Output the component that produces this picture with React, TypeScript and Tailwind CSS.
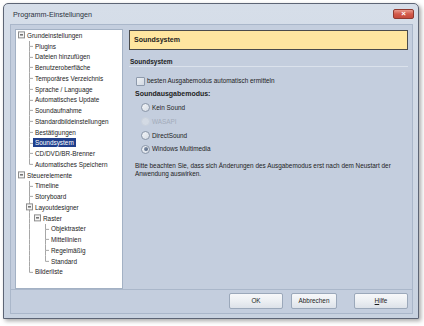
import React from "react";

type Row = {
  t: string;
  l: number;
  box?: boolean;
  first?: boolean;
  last?: boolean;
  guides?: boolean[];
  sel?: boolean;
};

const rows: Row[] = [
  { t: "Grundeinstellungen", l: 0, box: true },
  { t: "Plugins", l: 1, first: true },
  { t: "Dateien hinzufügen", l: 1 },
  { t: "Benutzeroberfläche", l: 1 },
  { t: "Temporäres Verzeichnis", l: 1 },
  { t: "Sprache / Language", l: 1 },
  { t: "Automatisches Update", l: 1 },
  { t: "Soundaufnahme", l: 1 },
  { t: "Standardbildeinstellungen", l: 1 },
  { t: "Bestätigungen", l: 1 },
  { t: "Soundsystem", l: 1, sel: true },
  { t: "CD/DVD/BR-Brenner", l: 1 },
  { t: "Automatisches Speichern", l: 1, last: true },
  { t: "Steuerelemente", l: 0, box: true },
  { t: "Timeline", l: 1, first: true },
  { t: "Storyboard", l: 1 },
  { t: "Layoutdesigner", l: 1, box: true },
  { t: "Raster", l: 2, box: true, first: true, last: true, guides: [true] },
  { t: "Objektraster", l: 3, first: true, guides: [true, false] },
  { t: "Mittellinien", l: 3, guides: [true, false] },
  { t: "Regelmäßig", l: 3, guides: [true, false] },
  { t: "Standard", l: 3, last: true, guides: [true, false] },
  { t: "Bilderliste", l: 1, last: true },
];

const H = 10.75;
const LINE = "#a7a7a7";

// one 8px column of tree connectors
function Cell({ top, bottom, stub, box }: { top?: boolean; bottom?: boolean; stub?: boolean; box?: boolean }) {
  const m = H / 2;
  return (
    <svg width="8" height={H} viewBox={`0 0 8 ${H}`} className="shrink-0 block">
      {top && <line x1="4.5" y1="0" x2="4.5" y2={m} stroke={LINE} strokeWidth="1" />}
      {bottom && <line x1="4.5" y1={m} x2="4.5" y2={H} stroke={LINE} strokeWidth="1" />}
      {stub && <line x1="4.5" y1={m} x2="8" y2={m} stroke={LINE} strokeWidth="1" />}
      {box && (
        <>
          <rect x="1.5" y={m - 3.5} width="6" height="6" fill="#f4f4f4" stroke="#8d8d8d" strokeWidth="1" />
          <line x1="3" y1={m - 0.5} x2="6" y2={m - 0.5} stroke="#2b2b2b" strokeWidth="1" />
        </>
      )}
    </svg>
  );
}

function TreeRow({ r }: { r: Row }) {
  const cells: React.ReactNode[] = [<div key="c0" className="w-[8px] shrink-0" />];
  if (r.l === 0) {
    cells[0] = <Cell key="c0" box />;
  } else {
    for (let k = 1; k < r.l; k++) {
      const g = r.guides?.[k - 1];
      cells.push(<Cell key={"g" + k} top={g} bottom={g} />);
    }
    if (r.box) {
      cells.push(<Cell key="own" top={!r.first} bottom={!r.last} box />);
    } else {
      cells.push(<Cell key="own" top bottom={!r.last} stub />);
    }
  }
  return (
    <div className="flex items-center h-[10.75px]">
      {cells}
      <span
        className={
          "px-[2px] leading-[9px] whitespace-nowrap " +
          (r.sel ? "bg-[#203f8c] text-white" : "text-[#1d1d1d]")
        }
      >
        {r.t}
      </span>
    </div>
  );
}

function Radio({ label, checked, disabled }: { label: string; checked?: boolean; disabled?: boolean }) {
  return (
    <div className="flex items-center h-[13.7px] pl-[12px] gap-[2px]">
      <span
        className={
          "w-[9px] h-[9px] rounded-full border flex items-center justify-center " +
          (disabled
            ? "border-[#c9d1dc] bg-[#d3dae4]"
            : "border-[#8a96a8] bg-gradient-to-br from-[#f3f5f8] to-[#d6dce5]")
        }
      >
        {checked && <span className="w-[4px] h-[4px] rounded-full bg-gradient-to-br from-[#8a9bb3] to-[#4f607a]" />}
      </span>
      <span className={disabled ? "text-[#a3acba]" : "text-[#1d1d1d]"}>{label}</span>
    </div>
  );
}

function Btn({ w, children }: { w: string; children: React.ReactNode }) {
  return (
    <div
      className={
        w +
        " h-[16px] rounded-[2px] border border-[#9ba8ba] bg-gradient-to-b from-[#f7f8fa] via-[#eceff3] to-[#dde2e9] flex items-center justify-center text-[#1d1d1d]"
      }
    >
      {children}
    </div>
  );
}

export default function App() {
  return (
    <div className="w-[424px] h-[326px] bg-white font-['Liberation_Sans',Arial,sans-serif] text-[6.4px] pt-[3px] pl-[3px]">
      <div className="w-[416px] h-[316px] rounded-t-[5px] border border-[#5d6575] bg-gradient-to-b from-[#d6dee9] to-[#c8d2e0] shadow-[2px_2px_4px_rgba(0,0,0,0.35)] flex flex-col">
        {/* title bar */}
        <div className="h-[20px] flex items-center pt-[3px] pl-[9px] pr-[4px] shrink-0">
          <span className="text-[7.2px] text-[#2b3340] flex-1">Programm-Einstellungen</span>
          <div className="w-[21px] h-[10px] -mt-[4px] rounded-[2px] border border-[#8f3a30] bg-gradient-to-b from-[#e8988c] via-[#d2594a] to-[#c44a3c] flex items-center justify-center text-white font-bold text-[8px] leading-none">
            ×
          </div>
        </div>

        {/* client area */}
        <div className="ml-[6px] mr-[5px] mb-[4px] flex-1 border border-[#aab7ca] bg-[#c4cede] flex flex-col">
          <div className="flex pt-[4px] pl-[4px] pr-[4px] h-[264px] shrink-0 gap-[6px]">
            {/* tree */}
            <div className="w-[108px] h-[260px] bg-white border border-[#a3b1c4] pl-[1px] overflow-hidden">
              {rows.map((r) => (
                <TreeRow key={r.t + r.l} r={r} />
              ))}
            </div>

            {/* settings page */}
            <div className="w-[279px] pt-[1px] flex flex-col">
              <div className="h-[20px] border border-[#4b4b4b] bg-[#ffe6a0] flex items-center pl-[4px] font-bold text-[7px] text-[#1d1d1d]">
                Soundsystem
              </div>
              <div className="mt-[7px] h-[10px] flex items-center pl-[1px] font-bold text-[6.5px] text-[#1d1d1d] border-b border-[#dbe2ec]">
                Soundsystem
              </div>
              <div className="mt-[9px] h-[10px] flex items-center pl-[7px] gap-[2px]">
                <span className="w-[9px] h-[9px] rounded-[1px] border border-[#8e9aac] bg-gradient-to-br from-[#eef1f5] to-[#d2d9e3]" />
                <span className="text-[#1d1d1d]">besten Ausgabemodus automatisch ermitteln</span>
              </div>
              <div className="mt-[3.5px] h-[9px] flex items-center pl-[6px] font-bold text-[7px] text-[#1d1d1d]">
                Soundausgabemodus:
              </div>
              <div className="mt-[2.6px] flex flex-col">
                <Radio label="Kein Sound" />
                <Radio label="WASAPI" disabled />
                <Radio label="DirectSound" />
                <Radio label="Windows Multimedia" checked />
              </div>
              <p className="mt-[6px] pl-[6px] pr-[3px] leading-[8.6px] text-[#1d1d1d]">
                Bitte beachten Sie, dass sich Änderungen des Ausgabemodus erst nach dem Neustart der Anwendung
                auswirken.
              </p>
            </div>
          </div>

          {/* buttons */}
          <div className="border-t border-[#aab7ca] flex-1 flex items-start pt-[3px] pl-[218px] gap-[8px]">
            <Btn w="w-[54px]">OK</Btn>
            <Btn w="w-[46px]">Abbrechen</Btn>
            <div className="ml-[9px]">
              <Btn w="w-[54px]">
                <span>
                  <span className="underline">H</span>ilfe
                </span>
              </Btn>
            </div>
          </div>
        </div>
      </div>
    </div>
  );
}
